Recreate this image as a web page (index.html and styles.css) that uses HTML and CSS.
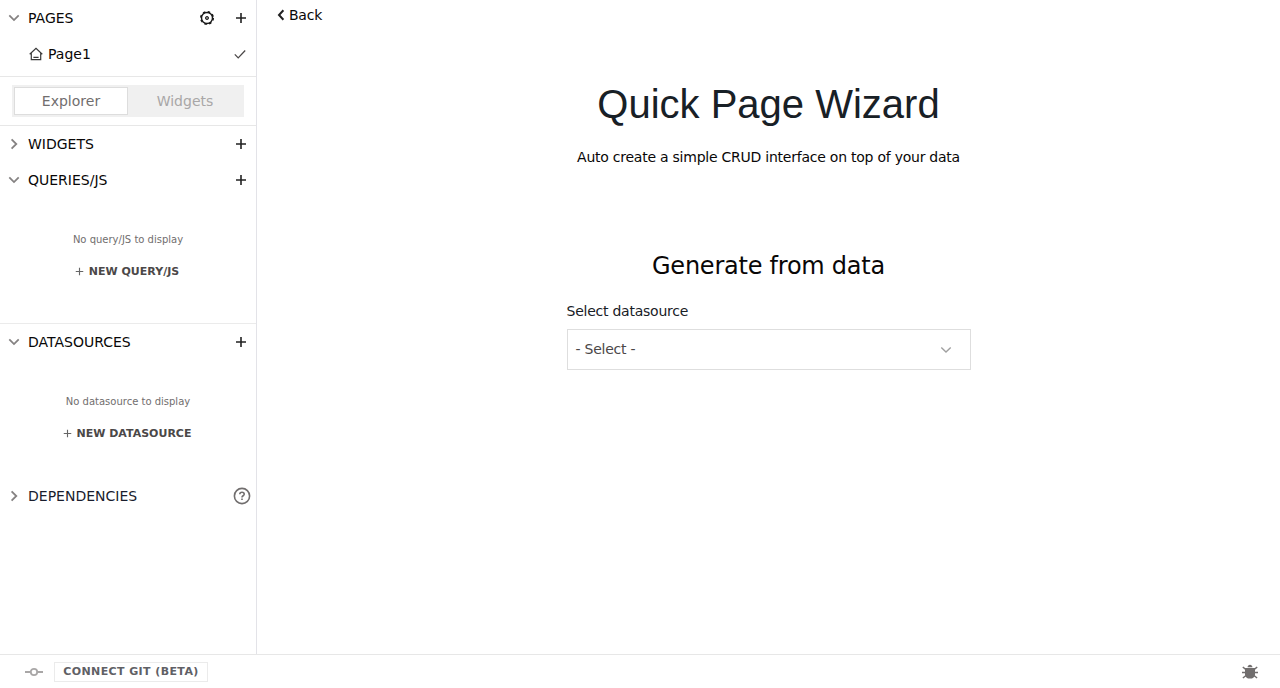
FILE: index.html
```html
<!DOCTYPE html>
<html lang="en">
<head>
<meta charset="utf-8">
<title>Quick Page Wizard</title>
<link rel="stylesheet" href="styles.css">
</head>
<body>
<svg class="symbols" aria-hidden="true">
  <symbol id="down" viewBox="0 0 12 12"><path d="M1.3 3.4 6 8.1l4.7-4.7"/></symbol>
  <symbol id="right" viewBox="0 0 12 12"><path d="M3.6 1.3 8.3 6l-4.7 4.7"/></symbol>
  <symbol id="plus" viewBox="0 0 12 12"><path d="M6 1v10M1 6h10"/></symbol>
</svg>
<div class="workspace">
  <aside class="sidebar">
    <section class="pages">
      <div class="row">
        <svg class="chevron"><use href="#down"/></svg>
        <span class="title">PAGES</span>
        <svg class="gear" viewBox="0 0 16 16"><circle class="teeth" cx="8" cy="8" r="6.2"/><circle cx="8" cy="8" r="5.5"/><circle class="hub" cx="8" cy="8" r="1.6"/></svg>
        <svg class="plus"><use href="#plus"/></svg>
      </div>
      <div class="row page">
        <svg class="home" viewBox="0 0 14 14"><path d="M.7 7.2 7 1.4l6.3 5.8M2.3 6v6.7h9.4V6M4.4 10.3h5.2"/></svg>
        <span class="title">Page1</span>
        <svg class="check" viewBox="0 0 12 12"><path d="m.8 6.4 3.4 3.5 7-7.4"/></svg>
      </div>
    </section>
    <div class="switcher">
      <div class="tabs"><span class="tab active">Explorer</span><span class="tab">Widgets</span></div>
    </div>
    <div class="row">
      <svg class="chevron"><use href="#right"/></svg><span class="title">WIDGETS</span><svg class="plus"><use href="#plus"/></svg>
    </div>
    <section class="queries">
      <div class="row">
        <svg class="chevron"><use href="#down"/></svg><span class="title">QUERIES/JS</span><svg class="plus"><use href="#plus"/></svg>
      </div>
      <div class="empty">
        <p class="hint">No query/JS to display</p>
        <div class="create"><svg class="small-plus"><use href="#plus"/></svg>NEW QUERY/JS</div>
      </div>
    </section>
    <section class="datasources">
      <div class="row">
        <svg class="chevron"><use href="#down"/></svg><span class="title">DATASOURCES</span><svg class="plus"><use href="#plus"/></svg>
      </div>
      <div class="empty">
        <p class="hint">No datasource to display</p>
        <div class="create"><svg class="small-plus"><use href="#plus"/></svg>NEW DATASOURCE</div>
      </div>
    </section>
    <div class="row dependencies">
      <svg class="chevron"><use href="#right"/></svg><span class="title">DEPENDENCIES</span>
      <svg class="help" viewBox="0 0 18 18"><circle cx="9" cy="9" r="7.6"/><path d="M6.8 7.3c0-1.2.9-2 2.2-2s2.2.8 2.2 1.9c0 1.5-2.2 1.6-2.2 3.2M9 11.6v1.5"/></svg>
    </div>
  </aside>
  <main class="main">
    <div class="back"><svg class="back-icon" viewBox="0 0 8 12"><path d="M6.4 1.3 2 6l4.4 4.7"/></svg>Back</div>
    <div class="wizard">
      <h1 class="heading">Quick Page Wizard</h1>
      <p class="subtitle">Auto create a simple CRUD interface on top of your data</p>
      <h2 class="subheading">Generate from data</h2>
      <div class="field">
        <div class="label">Select datasource</div>
        <div class="select"><span>- Select -</span><svg class="select-icon"><use href="#down"/></svg></div>
      </div>
    </div>
  </main>
</div>
<footer class="footer">
  <svg class="commit" viewBox="0 0 18 10"><path d="M0 5h6M12 5h6"/><circle cx="9" cy="5" r="3.2"/></svg>
  <div class="git">CONNECT GIT (BETA)</div>
  <svg class="bug" viewBox="0 0 16 16"><path class="body" d="M5.5 3.2C5.7 1.7 6.7.8 8 .8s2.3.9 2.5 2.4zM3 4h10v6.4c0 2.6-2.1 4.2-5 4.2s-5-1.6-5-4.2z"/><path class="legs" d="M.8 3 4 5.6M15.2 3 12 5.6M0 8.5h4M12 8.5h4M.9 14 4 11.5M15.1 14 12 11.5"/></svg>
</footer>
</body>
</html>
```
FILE: styles.css
```css
* { box-sizing: border-box; }
body {
  margin: 0;
  height: 688px;
  display: flex;
  flex-direction: column;
  overflow: hidden;
  background: #fff;
  color: #090707;
  font: 14px/20px "DejaVu Sans", sans-serif;
}
h1, h2, p { margin: 0; font-weight: 400; }
svg { display: block; flex: none; fill: none; stroke: currentColor; }
.symbols { position: absolute; width: 0; height: 0; }
.workspace { display: flex; flex: 1; min-height: 0; }
.sidebar { width: 257px; flex: none; border-right: 1px solid #e3e3e8; }
.pages { height: 77px; border-bottom: 1px solid #e7e7e7; }
.row { height: 36px; display: flex; align-items: center; padding: 0 9px 0 8px; }
.chevron { width: 12px; height: 12px; margin-right: 8px; color: #858282; stroke-width: 1.8; }
.title { flex: 1; }
.plus { width: 12px; height: 12px; color: #222; stroke-width: 1.6; }
.gear { width: 16px; height: 16px; margin-right: 20px; stroke: #191919; stroke-width: 1.4; }
.teeth { stroke-dasharray: 2.5 2.37; stroke-width: 1.6; }
.hub { fill: #777; stroke: #333; stroke-width: 1; }
.page { padding-left: 29px; }
.home { width: 14px; height: 14px; margin-right: 5px; stroke: #393939; stroke-width: 1.2; }
.check { width: 12px; height: 12px; stroke: #4b4848; stroke-width: 1.3; margin-right: 1px; }
.switcher { height: 49px; padding: 8px 12px; border-bottom: 1px solid #e7e7e7; }
.tabs { display: flex; height: 32px; padding: 2px; background: #f0f0f0; }
.tab { flex: 1; display: flex; align-items: center; justify-content: center; color: #a9a7a7; border: 1px solid transparent; }
.active { background: #fff; color: #716e6e; border-color: #ddd; }
.queries { height: 162px; border-bottom: 1px solid #ebebeb; }
.datasources { height: 154px; }
.empty { padding-top: 32px; text-align: center; }
.hint { font-size: 10px; line-height: 20px; color: #716e6e; }
.create { display: flex; justify-content: center; align-items: center; height: 20px; margin-top: 12px; padding-right: 2px; color: #4b4848; font-size: 11px; font-weight: 700; }
.small-plus { width: 9px; height: 9px; margin: 0 5px 1px 0; stroke-width: 1.5; color: #666; }
.dependencies { color: #191d2d; padding-right: 5px; }
.help { width: 18px; height: 18px; stroke: #716e6e; stroke-width: 1.6; }
.main { flex: 1; }
.back { display: flex; align-items: center; height: 20px; margin: 5px 0 0 20px; letter-spacing: -.24px; }
.back-icon { width: 8px; height: 12px; margin-right: 4px; stroke: #222; stroke-width: 2; }
.wizard { display: flex; flex-direction: column; align-items: center; padding-top: 55px; }
.heading { font: 40px/48px "Liberation Sans", Arial, sans-serif; color: #182026; }
.subtitle { margin-top: 19px; letter-spacing: -0.24px; }
.subheading { margin-top: 83px; font-size: 24px; line-height: 32px; letter-spacing: -0.24px; }
.field { width: 404px; margin-top: 19px; }
.label { color: #182026; letter-spacing: -.24px; }
.select { display: flex; align-items: center; justify-content: space-between; height: 41px; margin-top: 8px; padding: 0 18px 0 8px; border: 1px solid #dedede; color: #4b4848; letter-spacing: -.24px; }
.select span { padding-bottom: 2px; }
.select-icon { width: 12px; height: 12px; color: #a0a0a0; stroke-width: 1.4; }
.footer { display: flex; align-items: center; height: 34px; border-top: 1px solid #e7e7e7; padding: 0 22px 0 25px; }
.commit { width: 18px; height: 10px; stroke: #a9a7a7; stroke-width: 1.8; }
.git { width: 154px; height: 20px; line-height: 18px; margin-left: 11px; border: 1px solid #ebebeb; text-align: center; font-size: 11px; font-weight: 700; color: #606065; letter-spacing: .4px; }
.bug { width: 16px; height: 16px; margin-left: auto; }
.body { fill: #716e6e; stroke: none; }
.legs { stroke: #716e6e; stroke-width: 1.5; }
```
